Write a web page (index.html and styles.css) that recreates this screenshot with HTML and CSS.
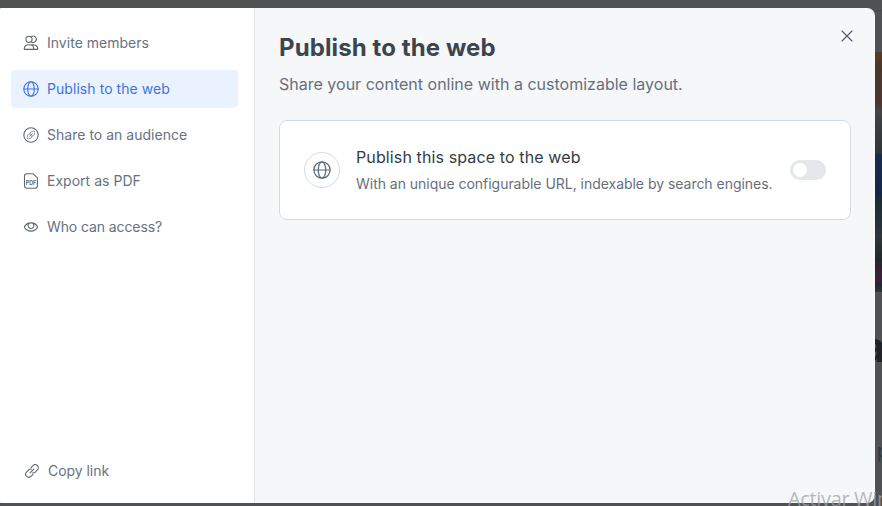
FILE: index.html
```html
<!DOCTYPE html>
<html lang="en">
<head>
<meta charset="utf-8">
<title>Publish to the web</title>
<link rel="stylesheet" href="styles.css">
</head>
<body>
<svg class="sprite" aria-hidden="true">
  <symbol id="globe" viewBox="0 0 16 16"><circle cx="8" cy="8" r="7.2"/><ellipse cx="8" cy="8" rx="3.3" ry="7.2"/><path d="M.8 8h14.4"/></symbol>
  <symbol id="link" viewBox="0 0 16 16"><path d="M7 4 9.200 1.800a3.500 3.500 0 0 1 5 5L11.800 9.200a3.500 3.500 0 0 1-2.900 1M9 12 6.800 14.200a3.500 3.500 0 0 1-5-5L4.200 6.800a3.500 3.500 0 0 1 2.900-1M5.800 10.200l4.400-4.400"/></symbol>
</svg>
<div class="page">
  <div class="cover"></div>
  <div class="page-title">a</div>
  <div class="page-text">p</div>
</div>
<main class="modal">
  <aside class="sidebar">
    <nav class="menu">
      <a class="item"><svg class="icon" viewBox="0 0 16 16"><circle cx="6" cy="4.300" r="3.100"/><path d="M8.200 1.900a3.100 3.100 0 1 1 0 4.800M1.300 14.400v-1c0-2.200 1.700-3.700 4.700-3.700s4.700 1.500 4.700 3.700v1zM8.500 9.800c3.800-.5 6.200 1.200 6.200 3.600v1h-4"/></svg>Invite members</a>
      <a class="item active"><svg class="icon"><use href="#globe"/></svg>Publish to the web</a>
      <a class="item"><svg class="icon" viewBox="0 0 16 16"><circle cx="8" cy="8" r="7.200"/><svg class="inner" x="3.500" y="3.500" width="9" height="9"><use href="#link"/></svg></svg>Share to an audience</a>
      <a class="item"><svg class="icon" viewBox="0 0 16 16"><path d="M3.700.8h6.500l4.200 4.100v7.900a2.400 2.400 0 0 1-2.400 2.400H3.900a2.400 2.400 0 0 1-2.400-2.400V3.100A2.300 2.300 0 0 1 3.700.8z"/><text class="pdf" x="8" y="11.500" textLength="10.600" lengthAdjust="spacingAndGlyphs">PDF</text></svg>Export as PDF</a>
      <a class="item last"><svg class="icon" viewBox="0 0 16 16"><path d="M1.300 8C2.700 5.200 5 3.900 8 3.900S13.300 5.200 14.700 8c-1.400 2.800-3.700 4.100-6.700 4.100S2.700 10.800 1.300 8z"/><path d="M6 4.500a2.900 2.900 0 1 0 4 0"/></svg>Who can access?</a>
    </nav>
    <a class="copy"><svg class="icon"><use href="#link"/></svg>Copy link</a>
  </aside>
  <section class="content">
    <header class="head">
      <h1>Publish to the web</h1>
      <svg class="close" viewBox="0 0 12 12"><path d="M1 1l10 10M11 1 1 11"/></svg>
    </header>
    <p class="lead">Share your content online with a customizable layout.</p>
    <div class="card">
      <span class="badge"><svg class="globe"><use href="#globe"/></svg></span>
      <div class="info">
        <h2>Publish this space to the web</h2>
        <p>With an unique configurable URL, indexable by search engines.</p>
      </div>
      <span class="toggle"><span class="knob"></span></span>
    </div>
  </section>
</main>
<div class="watermark">Activar Win</div>
</body>
</html>
```
FILE: styles.css
```css
* { box-sizing: border-box; }
body {
  margin: 0;
  height: 506px;
  overflow: hidden;
  position: relative;
  padding-top: 8px;
  background: #505152;
  font-family: Inter, sans-serif;
}
h1, h2, p { margin: 0; }
.sprite { position: absolute; width: 0; height: 0; }
.page {
  position: absolute;
  top: 10px;
  right: 0;
  width: 12px;
  height: 496px;
  overflow: hidden;
  border-top: 1px solid #48494a;
}
.cover {
  margin-top: 41px;
  height: 240px;
  background: linear-gradient(#553c23 0, #4b362b 15px, #49372f 51px, #454444 60px, #393e40 72px, #303638 101px, #182b4c 103px, #142747 141px, #1c2b35 146px, #29343b 180px, #303538 184px, #20292a 208px, #362033 217px, #3b203d 229px, #20292c 233px, #303638 100%);
}
.page-title {
  margin: 30px 0 0 -9px;
  font-size: 42px;
  line-height: 50px;
  font-weight: 700;
  color: #202228;
}
.page-text {
  margin: 67px 0 0 7px;
  font-size: 20px;
  line-height: 24px;
  color: #303843;
}
.modal {
  position: relative;
  display: flex;
  width: 880px;
  height: 495px;
  margin-left: -5px;
  border-radius: 8px;
  overflow: hidden;
  background: #f5f7f9;
}
.sidebar {
  width: 260px;
  padding: 16px 16px 13px;
  display: flex;
  flex-direction: column;
  justify-content: space-between;
  background: #fff;
  border-right: 1px solid #dfe5ea;
}
.menu { display: flex; flex-direction: column; gap: 8px; }
.item, .copy {
  display: flex;
  align-items: center;
  gap: 8px;
  height: 38px;
  padding: 0 12px;
  border-radius: 4px;
  font-size: 14px;
  line-height: 20px;
  letter-spacing: 0.02px;
  color: #66737f;
}
.copy { padding-left: 14px; letter-spacing: -0.05px; }
.last { letter-spacing: -0.1px; }
.active { background: #ebf2ff; color: #3d72de; letter-spacing: 0.06px; }
svg { fill: none; stroke: #5b6975; stroke-width: 1.1; stroke-linecap: round; stroke-linejoin: round; }
.icon { width: 16px; height: 16px; flex: none; }
.inner { stroke-width: 1.6; }
.active .icon, .active svg { stroke: #3d72de; }
.copy .icon { width: 14px; height: 14px; margin-right: 1px; stroke-width: 1.3; }
.pdf { font: 700 6.5px Inter, sans-serif; fill: #5b6975; stroke: none; text-anchor: middle; }
.content { flex: 1; padding: 16px 24px 0; }
.head { display: flex; justify-content: space-between; }
h1 {
  margin-top: 8px;
  font-size: 24px;
  line-height: 32px;
  font-weight: 700;
  letter-spacing: 0.1px;
  color: #3b454e;
}
.close { width: 12px; height: 12px; margin: 6px -2px 0 0; stroke: #4d5a66; }
.lead {
  margin-top: 8px;
  font-size: 16px;
  line-height: 24px;
  letter-spacing: 0.01px;
  color: #66707b;
}
.card {
  display: flex;
  align-items: center;
  height: 100px;
  margin-top: 24px;
  padding: 0 24px;
  background: #fff;
  border: 1px solid #d3dce4;
  border-radius: 8px;
}
.badge {
  display: flex;
  align-items: center;
  justify-content: center;
  width: 36px;
  height: 36px;
  border: 1px solid #d3dce4;
  border-radius: 50%;
}
.globe { width: 18px; height: 18px; }
.info { flex: 1; margin-left: 16px; white-space: nowrap; }
h2 { font-size: 16px; line-height: 24px; font-weight: 400; letter-spacing: 0.12px; color: #343c45; }
.info p { margin-top: 4px; font-size: 14px; line-height: 22px; letter-spacing: -0.03px; color: #66707b; }
.toggle {
  width: 36px;
  height: 20px;
  padding: 3px;
  border-radius: 10px;
  background: #e2e8ec;
}
.knob { display: block; width: 14px; height: 14px; border-radius: 50%; background: #fff; }
.watermark {
  position: absolute;
  left: 788px;
  top: 486px;
  width: 94px;
  overflow: hidden;
  font: 20px/26px "Open Sans", sans-serif;
  letter-spacing: -0.35px;
  white-space: nowrap;
  color: rgba(160, 163, 166, 0.75);
}
```
